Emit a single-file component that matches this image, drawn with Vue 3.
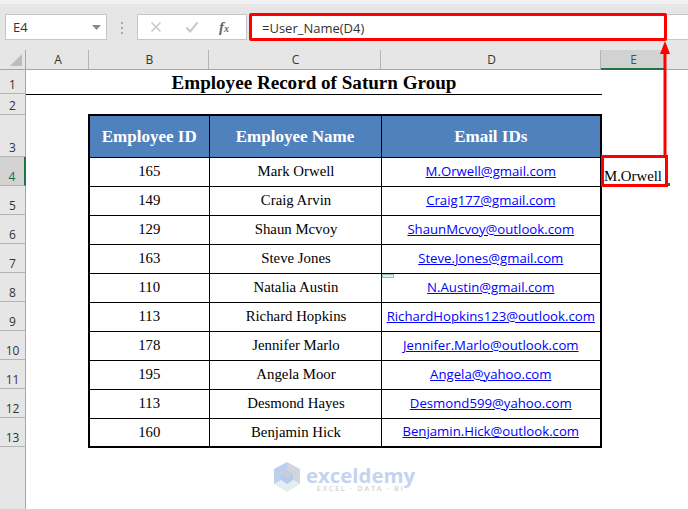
<script setup>
const cols = [
  { name: 'A', width: 63 },
  { name: 'B', width: 120 },
  { name: 'C', width: 172 },
  { name: 'D', width: 220 },
  { name: 'E', width: 64, active: true },
]
const rowHeads = [
  { n: 1, h: 24 }, { n: 2, h: 21 }, { n: 3, h: 42 }, { n: 4, h: 29, active: true },
  { n: 5, h: 29 }, { n: 6, h: 29 }, { n: 7, h: 29 }, { n: 8, h: 29 }, { n: 9, h: 29 },
  { n: 10, h: 29 }, { n: 11, h: 29 }, { n: 12, h: 29 }, { n: 13, h: 29 },
]
const people = [
  [165, 'Mark Orwell', 'M.Orwell@gmail.com'],
  [149, 'Craig Arvin', 'Craig177@gmail.com'],
  [129, 'Shaun Mcvoy', 'ShaunMcvoy@outlook.com'],
  [163, 'Steve Jones', 'Steve.Jones@gmail.com'],
  [110, 'Natalia Austin', 'N.Austin@gmail.com'],
  [113, 'Richard Hopkins', 'RichardHopkins123@outlook.com'],
  [178, 'Jennifer Marlo', 'Jennifer.Marlo@outlook.com'],
  [195, 'Angela Moor', 'Angela@yahoo.com'],
  [113, 'Desmond Hayes', 'Desmond599@yahoo.com'],
  [160, 'Benjamin Hick', 'Benjamin.Hick@outlook.com'],
]
</script>

<template>
  <div class="app">
    <div class="strip"></div>
    <div class="formula-row">
      <div class="namebox">
        <span>E4</span>
        <svg width="9" height="5" viewBox="0 0 9 5"><path d="M0 0h9L4.5 5z" fill="#8a8a8a" /></svg>
      </div>
      <div class="dots"><i></i><i></i><i></i></div>
      <div class="fx-box">
        <svg width="12" height="12" viewBox="0 0 12 12"><path d="M1.5 1.5l9 9M10.5 1.5l-9 9" stroke="#c8c8c8" stroke-width="1.6" fill="none" /></svg>
        <svg width="14" height="12" viewBox="0 0 14 12"><path d="M1.5 6.5l3.5 4L12.500 1.500" stroke="#c8c8c8" stroke-width="2" fill="none" /></svg>
        <span class="fx">f<small>x</small></span>
      </div>
      <div class="formula-input">=User_Name(D4)</div>
    </div>

    <div class="col-heads">
      <div class="corner"><svg width="12" height="12" viewBox="0 0 12 12"><path d="M12 0v12H0z" fill="#bcbcbc" /></svg></div>
      <div v-for="c in cols" :key="c.name" class="col-head" :class="{ active: c.active }" :style="{ width: c.width + 'px' }">{{ c.name }}</div>
    </div>

    <div class="sheet">
      <div class="row-heads">
        <div v-for="r in rowHeads" :key="r.n" class="row-head" :class="{ active: r.active }" :style="{ height: r.h + 'px' }">{{ r.n }}</div>
      </div>
      <div class="cells">
        <div class="title">Employee Record of Saturn Group</div>
        <table class="records">
          <thead>
            <tr><th class="c-id">Employee ID</th><th class="c-name">Employee Name</th><th class="c-mail">Email IDs</th></tr>
          </thead>
          <tbody>
            <tr v-for="p in people" :key="p[2]">
              <td>{{ p[0] }}</td>
              <td class="who">{{ p[1] }}</td>
              <td class="mail"><a>{{ p[2] }}</a></td>
            </tr>
          </tbody>
        </table>
        <div class="handle"></div>
      </div>
    </div>

    <div class="result">M.Orwell</div>
    <div class="mark-box"></div>
    <div class="mark-formula"></div>
    <div class="fill-handle"></div>
    <svg class="arrow" width="12" height="118" viewBox="0 0 12 118">
      <path d="M6 10v106" stroke="#fe0000" stroke-width="3" fill="none" />
      <path d="M6 0l5 13H1z" fill="#fe0000" />
    </svg>

    <div class="watermark">
      <svg width="28" height="32" viewBox="0 0 28 32">
        <path d="M14 1L1 8v15l13-7z" fill="#bcd0ee" />
        <path d="M14 1l13 7v15l-13-7z" fill="#cfd6df" />
        <path d="M1 23l13-7 13 7-13 8z" fill="#e4eef0" />
        <path d="M14 9l6 4v6l-6 4-6-4v-6z" fill="#b4cbf0" />
        <path d="M14 9l6 4-6 4-6-4z" fill="#c9ced3" />
      </svg>
      <div class="wm-text">
        <div class="wm-name">exceldemy</div>
        <div class="wm-sub">EXCEL · DATA · BI</div>
      </div>
    </div>
  </div>
</template>

<style scoped>
.app {
  position: relative;
  width: 688px;
  height: 509px;
  overflow: hidden;
  background: #fff;
  font-family: "Open Sans", "Liberation Sans", sans-serif;
}
.strip {
  height: 4px;
  background: #f1f1f1;
}
.formula-row {
  display: flex;
  align-items: flex-start;
  height: 46px;
  padding: 10px 0 0 5px;
  box-sizing: border-box;
  background: #e6e6e6;
  position: relative;
}
.namebox {
  width: 102px;
  height: 26px;
  box-sizing: border-box;
  background: #fff;
  border: 1px solid #c6c6c6;
  display: flex;
  align-items: center;
  justify-content: space-between;
  padding: 0 5px 0 7px;
  font-size: 13px;
  color: #333;
}
.dots {
  width: 30px;
  display: flex;
  flex-direction: column;
  align-items: center;
  gap: 3px;
  padding-top: 8px;
}
.dots i {
  width: 2px;
  height: 2px;
  background: #aaa;
}
.fx-box {
  width: 110px;
  height: 26px;
  box-sizing: border-box;
  background: #fff;
  border: 1px solid #c6c6c6;
  display: flex;
  align-items: center;
  padding-left: 12px;
  font-size: 12px;
}
.fx-box svg:nth-child(2) {
  margin-left: 23px;
}
.fx {
  margin-left: 20px;
  font-family: "Liberation Serif", serif;
  font-style: italic;
  font-weight: bold;
  font-size: 15px;
  color: #666;
}
.fx small {
  font-size: 10px;
}
.formula-input {
  flex: 1;
  height: 26px;
  box-sizing: border-box;
  margin-left: 3px;
  padding-left: 12px;
  background: #fff;
  border-top: 1px solid #c6c6c6;
  border-bottom: 1px solid #c6c6c6;
  font-size: 13px;
  line-height: 26px;
  color: #333;
}
.col-heads {
  display: flex;
  height: 20px;
  background: #e6e6e6;
  border-bottom: 1px solid #a6a6a6;
  box-sizing: border-box;
}
.corner {
  width: 26px;
  box-sizing: border-box;
  border-right: 1px solid #a6a6a6;
  display: flex;
  align-items: flex-end;
  justify-content: flex-end;
  padding: 0 3px 3px 0;
}
.col-head {
  box-sizing: border-box;
  border-right: 1px solid #b4b4b4;
  padding-left: 2px;
  text-align: center;
  font-size: 12px;
  line-height: 19px;
  color: #333;
}
.col-head.active {
  background: #d2d2d2;
  height: 20px;
  border-bottom: 2px solid #217346;
  color: #1f6b45;
}
.sheet {
  display: flex;
}
.row-heads {
  width: 26px;
  flex: none;
  background: #e6e6e6;
  border-right: 1px solid #a6a6a6;
  box-sizing: border-box;
  height: 439px;
}
.row-head {
  box-sizing: border-box;
  border-bottom: 1px solid #b4b4b4;
  display: flex;
  align-items: flex-end;
  justify-content: center;
  font-size: 12px;
  color: #333;
}
.row-head.active {
  background: #d2d2d2;
  border-right: 2px solid #217346;
  margin-right: -1px;
  color: #1f6b45;
}
.cells {
  position: relative;
  flex: 1;
}
.title {
  width: 576px;
  height: 25px;
  box-sizing: border-box;
  border-bottom: 1px solid #000;
  text-align: center;
  font-family: "Liberation Serif", serif;
  font-weight: bold;
  font-size: 19.1px;
  line-height: 26px;
  color: #000;
}
.records {
  margin: 19px 0 0 62px;
  width: 514px;
  border-collapse: collapse;
  table-layout: fixed;
  border: 2px solid #000;
  font-family: "Liberation Serif", serif;
  font-size: 14.8px;
  color: #000;
}
.records th {
  height: 42px;
  padding: 2px 0 0;
  background: #4f81bd;
  color: #fff;
  font-size: 17px;
  font-weight: bold;
  border: 1px solid #000;
  box-sizing: border-box;
}
.c-id { width: 120px; }
.c-name { width: 172px; }
.records td {
  height: 29px;
  padding: 0;
  text-align: center;
  border: 1px solid #000;
  box-sizing: border-box;
}
.records td.who {
  padding-left: 2px;
}
.records td.mail {
  padding-bottom: 2px;
  font-family: "Open Sans", "Liberation Sans", sans-serif;
  font-size: 13.2px;
}
.mail a {
  color: #0000ff;
  text-decoration: underline;
}
.handle {
  position: absolute;
  left: 356px;
  top: 204px;
  width: 12px;
  height: 4px;
  box-sizing: border-box;
  background: #e3f0e8;
  border: 1px solid #8fc8a6;
}
.result {
  position: absolute;
  left: 604px;
  top: 168px;
  font-family: "Liberation Serif", serif;
  font-size: 14.8px;
  color: #000;
}
.mark-box {
  position: absolute;
  left: 601px;
  top: 155px;
  width: 67px;
  height: 32px;
  box-sizing: border-box;
  border: 3px solid #fe0000;
}
.mark-formula {
  position: absolute;
  left: 249px;
  top: 13px;
  width: 418px;
  height: 28px;
  box-sizing: border-box;
  border: 3px solid #fe0000;
  border-radius: 2px;
}
.fill-handle {
  position: absolute;
  left: 668px;
  top: 183px;
  width: 2px;
  height: 3px;
  background: #217346;
}
.arrow {
  position: absolute;
  left: 659px;
  top: 41px;
}
.watermark {
  position: absolute;
  left: 273px;
  top: 461px;
  display: flex;
  gap: 5px;
}
.wm-name {
  margin-top: 5px;
  font-family: "Open Sans", sans-serif;
  font-weight: 700;
  font-size: 20.4px;
  line-height: 18px;
  color: #c4d4f0;
}
.wm-sub {
  font-size: 7.5px;
  line-height: 9px;
  letter-spacing: 1.6px;
  font-weight: 600;
  color: #d4d4d4;
  text-align: center;
}
</style>

<style>
html, body { margin: 0; background: #fff; }
</style>
